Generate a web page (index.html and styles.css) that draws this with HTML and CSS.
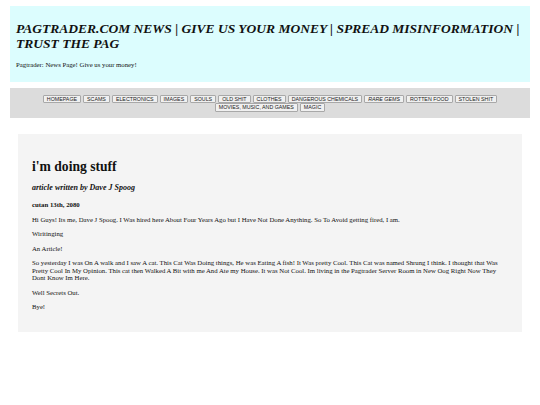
FILE: index.html
```html
<!DOCTYPE html>
<html lang="en">
<head>
	<meta charset="utf-8" />
	<title>Pagtrader.com News</title>
	<link rel="stylesheet" href="styles.css">
</head>
<body>
<header class="masthead">
	<h1>PAGTRADER.COM NEWS | GIVE US YOUR MONEY | SPREAD MISINFORMATION | TRUST THE PAG</h1>
	<p>Pagtrader: News Page! Give us your money!</p>
</header>

<nav class="topnav">
	<button>HOMEPAGE</button>
	<button>SCAMS</button>
	<button>ELECTRONICS</button>
	<button>IMAGES</button>
	<button>SOULS</button>
	<button>OLD SHIT</button>
	<button>CLOTHES</button>
	<button>DANGEROUS CHEMICALS</button>
	<button><i>RARE GEMS</i></button>
	<button>ROTTEN FOOD</button>
	<button>STOLEN SHIT</button>
	<button>MOVIES, MUSIC, AND GAMES</button>
	<button>MAGIC</button>
</nav>

<article class="post">
	<h2>i'm doing stuff</h2>
	<h3><i>article written by Dave J Spoog</i></h3>
	<h4>cutan 13th, 2080</h4>
	<p>Hi Guys! Its me, Dave J Spoog. I Was hired here About Four Years Ago but I Have Not Done Anything. So To Avoid getting fired, I am.</p>
	<p>Wiritinging</p>
	<p>An Article!</p>
	<p>So yesterday I was On A walk and I saw A cat. This Cat Was Doing things, He was Eating A fish! It Was pretty Cool. This Cat was named Shrung I think. I thought that Was Pretty Cool In My Opinion. This cat then Walked A Bit with me And Ate my House. It was Not Cool. Im living in the Pagtrader Server Room in New Oog Right Now They Dont Know Im Here.</p>
	<p>Well Secrets Out.</p>
	<p>Bye!</p>
</article>

</body>
</html>
```

FILE: styles.css
```css
*{
	font-family:"Liberation Serif", serif;
}

body{
	margin:6px 10px;
	color:#111;
	font-size:6.75px;
}

.masthead{
	background-color:#dcfdfe;
	padding:14.5px 6px 13px;
}

.masthead h1{
	font-size:13.5px;
	font-style:italic;
	font-weight:bold;
	line-height:15px;
	margin:0 0 10px;
}

.masthead p{
	margin:0;
	line-height:8px;
}

.topnav{
	background-color:#dcdcdc;
	margin-top:6.5px;
	padding:6.5px 20px;
	display:flex;
	flex-wrap:wrap;
	justify-content:center;
	column-gap:2px;
}

.topnav button{
	font-family:"Liberation Sans", sans-serif;
	font-size:5.3px;
	background-color:#f0f0f0;
	border:1px solid #a8a8a8;
	border-radius:1px;
	padding:0 3px;
	margin:0;
	color:#222;
	line-height:6.5px;
}

.topnav button i{
	font-family:"Liberation Sans", sans-serif;
}

.post{
	background-color:#f4f4f4;
	margin:16px 8px 0;
	padding:14px 14px 14px;
}

.post h2{
	font-size:13.6px;
	line-height:15px;
	margin:10.5px 0 9.5px;
}

.post h3{
	font-size:8px;
	line-height:9px;
	margin:0 0 8.5px;
}

.post h4{
	font-size:6.8px;
	line-height:8px;
	margin:0 0 7.5px;
}

.post p{
	line-height:7.6px;
	margin:0 0 6.8px;
}
```
